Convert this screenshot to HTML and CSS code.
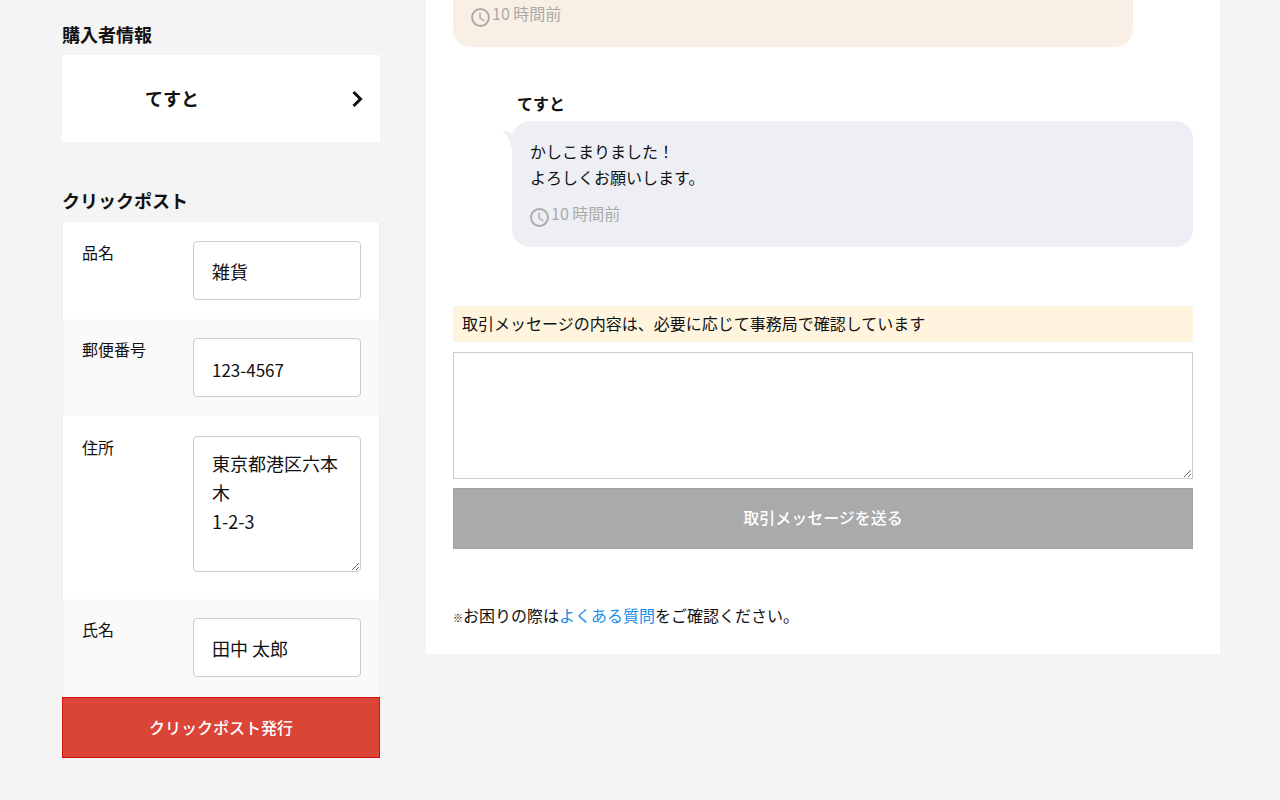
FILE: index.html
```html
<!DOCTYPE html>
<html lang="ja">
<head>
<meta charset="utf-8">
<meta name="viewport" content="width=device-width, initial-scale=1">
<title>取引画面</title>
<link rel="stylesheet" href="styles.css">
</head>
<body>
<div class="page">
  <aside class="sidebar">
    <section class="buyer">
      <h2 class="heading">購入者情報</h2>
      <a class="buyer-card" href="#">
        <span>てすと</span>
        <svg class="chevron" viewBox="0 0 14 20" aria-hidden="true"><path d="M3.500 3 L10.500 10 L3.500 17"/></svg>
      </a>
    </section>
    <section class="post">
      <h2 class="heading">クリックポスト</h2>
      <form>
        <div class="fields">
          <div class="row"><label for="item">品名</label><input class="field" id="item" type="text" value="雑貨"></div>
          <div class="row"><label for="zip">郵便番号</label><input class="field field-zip" id="zip" type="text" value="123-4567"></div>
          <div class="row row-tall"><label for="address">住所</label><textarea class="field field-address" id="address">東京都港区六本木
1-2-3</textarea></div>
          <div class="row"><label for="name">氏名</label><input class="field" id="name" type="text" value="田中 太郎"></div>
        </div>
        <button class="button button-red" type="button">クリックポスト発行</button>
      </form>
    </section>
  </aside>
  <main class="main">
    <div class="bubble bubble-own">
      <div class="time">
        <svg class="clock" viewBox="0 0 20 20" aria-hidden="true"><circle cx="10" cy="10" r="8.900"/><path d="M9.500 5 V10.500 L14 13.500"/></svg>
        <span>10 時間前</span>
      </div>
    </div>
    <article class="message">
      <h3 class="sender">てすと</h3>
      <div class="bubble bubble-other">
        <svg class="tail" viewBox="0 0 14 20" aria-hidden="true"><path d="M0 1 Q7 1 11 4 L14 4 V20 H10 Q8 7 0 1 Z"/></svg>
        <p class="text">かしこまりました！<br>よろしくお願いします。</p>
        <div class="time">
          <svg class="clock" viewBox="0 0 20 20" aria-hidden="true"><circle cx="10" cy="10" r="8.900"/><path d="M9.500 5 V10.500 L14 13.500"/></svg>
          <span>10 時間前</span>
        </div>
      </div>
    </article>
    <form class="compose">
      <p class="notice">取引メッセージの内容は、必要に応じて事務局で確認しています</p>
      <textarea class="compose-text" aria-label="取引メッセージ"></textarea>
      <button class="button button-gray" type="button">取引メッセージを送る</button>
    </form>
    <p class="help"><span class="mark">※</span>お困りの際は<a href="#">よくある質問</a>をご確認ください。</p>
  </main>
</div>
</body>
</html>
```
FILE: styles.css
```css
* { box-sizing: border-box; }
body {
  margin: 0;
  background: #f4f4f4;
  color: #111;
  font: 16px/26px "Noto Sans CJK JP", sans-serif;
}
h2, h3, p { margin: 0; }
button, input, textarea { font: inherit; color: inherit; }

.page {
  display: flex;
  align-items: flex-start;
  gap: 46px;
  padding: 0 60px 40px 62px;
}

.sidebar { flex: 0 0 318px; padding-top: 21px; }
.heading { font-size: 18px; line-height: 26px; font-weight: 600; margin-bottom: 8px; }
.buyer-card {
  display: flex;
  align-items: center;
  justify-content: space-between;
  height: 87px;
  padding: 0 16px 0 83px;
  background: #fff;
  color: inherit;
  font-size: 18px;
  font-weight: 600;
  text-decoration: none;
}
.buyer-card span { padding-bottom: 2px; }
.chevron { width: 14px; height: 20px; fill: none; stroke: #111; stroke-width: 3; }
.post { margin-top: 45px; }
.fields { border: 1px solid #eee; border-bottom: 0; background: #fff; }
.row {
  display: flex;
  align-items: flex-start;
  justify-content: space-between;
  padding: 19px 18px 19px 19px;
}
.row:nth-child(even) { background: #fafafa; }
.row:last-child { padding-bottom: 20px; }
.row label { line-height: 22px; }
.row-tall { padding-top: 20px; padding-bottom: 27px; }
.field {
  width: 168px;
  height: 59px;
  padding: 0 18px;
  border: 1px solid #ccc;
  border-radius: 4px;
  background: #fff;
  font-size: 18px;
}
.field-zip { padding-top: 3px; font-size: 17px; }
.field-address { height: 136px; padding: 12px 18px; line-height: 29px; }

.button {
  display: block;
  width: 100%;
  height: 61px;
  padding: 0 0 3px;
  color: #fff;
  font-weight: 500;
  text-align: center;
}
.button-red { padding-bottom: 1px; border: 1px solid #d0120a; background: #da4538; }
.button-gray { border: 1px solid #a3a3a3; background: #aaa; }

.main { flex: 1; min-width: 0; padding: 0 27px 26px; background: #fff; }
.bubble { padding: 17px 18px 20px; border-radius: 18px; }
.bubble-own {
  margin-right: 60px;
  padding-top: 1px;
  border-radius: 0 0 18px 18px;
  background: #f9efe5;
}
.message { margin: 43px 0 59px 59px; }
.sender { padding-left: 5px; font-size: 16px; line-height: 26px; font-weight: 600; margin-bottom: 5px; }
.bubble-other { position: relative; background: #eeeff4; }
.tail { position: absolute; left: -10px; top: 9px; width: 14px; height: 20px; fill: #eeeff4; }
.time { display: flex; align-items: flex-end; gap: 2px; height: 26px; color: #aaa; }
.time span { align-self: flex-start; line-height: 24px; }
.text + .time { margin-top: 11px; }
.clock { width: 19px; height: 19px; fill: none; stroke: #aaa; stroke-width: 2; }
.clock path { stroke-width: 1.500; }
.notice { padding: 4px 9px 6px; background: #fff5df; }
.compose-text {
  display: block;
  width: 100%;
  height: 127px;
  margin: 10px 0 9px;
  padding: 12px 18px;
  border: 1px solid #ccc;
  border-radius: 0;
}
.help { margin-top: 53px; }
.help a { color: #198fe8; text-decoration: none; }
.mark { color: #000; font-size: 10px; line-height: 10px; font-weight: 900; }
```
